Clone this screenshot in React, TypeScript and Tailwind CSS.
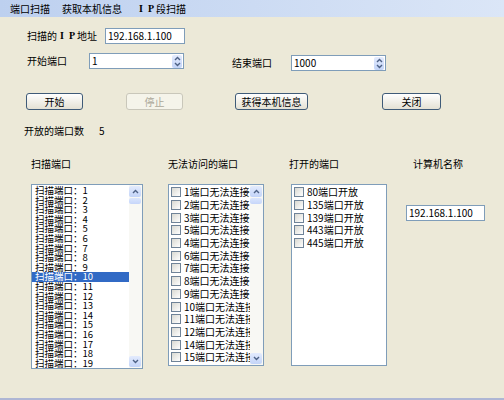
import React from "react";

const ports = Array.from({ length: 19 }, (_, i) => i + 1);
const blocked = [1, 2, 3, 5, 4, 6, 7, 8, 9, 10, 11, 12, 14, 15];
const opened = [80, 135, 139, 443, 445];

function Chevron({ up }: { up?: boolean }) {
  return (
    <svg width="7" height="5" viewBox="0 0 7 5" className="block">
      <path
        d={up ? "M1 4 L3.5 1.5 L6 4" : "M1 1 L3.5 3.5 L6 1"}
        fill="none"
        stroke="#4d6185"
        strokeWidth="1.4"
      />
    </svg>
  );
}

function IP() {
  // "I P" in the bold serif look of the original
  return (
    <>
      <span className="inline-block w-[10px] text-center font-['Liberation_Serif',serif] font-bold">I</span>
      <span className="inline-block w-[10px] text-center font-['Liberation_Serif',serif] font-bold">P</span>
    </>
  );
}

function TextBox({ value, className }: { value: string; className?: string }) {
  return (
    <div className={`h-[16px] border border-[#7f9db9] bg-white flex items-center pl-[2px] ${className ?? ""}`}>
      {value}
    </div>
  );
}

function SpinBox({ value }: { value: string }) {
  return (
    <div className="w-[95px] h-[16px] border border-[#7f9db9] bg-white flex items-center pl-[2px] pr-[1px]">
      <span className="flex-1">{value}</span>
      <div className="w-[10px] h-[13px] rounded-[2px] bg-gradient-to-b from-[#e3ebfd] to-[#c3d4f8] flex flex-col items-center justify-center gap-[1px]">
        <Chevron up />
        <Chevron />
      </div>
    </div>
  );
}

function Button({ label, w, disabled }: { label: string; w: string; disabled?: boolean }) {
  return (
    <div
      className={`${w} h-[17px] rounded-[3px] border flex items-center justify-center ${
        disabled
          ? "border-[#c9c7ba] bg-[#f5f4ea] text-[#aca899]"
          : "border-[#3f5b78] bg-gradient-to-b from-white to-[#e4e1d4] text-black"
      }`}
    >
      {label}
    </div>
  );
}

function ScrollBar() {
  return (
    <div className="w-[13px] flex flex-col py-[1px] pr-[1px] bg-[#f8f8f4]">
      <div className="h-[11px] rounded-[2px] bg-gradient-to-b from-[#e3ebfd] to-[#c3d4f8] flex items-center justify-center">
        <Chevron up />
      </div>
      <div className="h-[6px] mt-[1px] rounded-[2px] bg-gradient-to-b from-[#dbe6fd] to-[#c6d6fa]" />
      <div className="flex-1" />
      <div className="h-[11px] rounded-[2px] bg-gradient-to-b from-[#e3ebfd] to-[#c3d4f8] flex items-center justify-center">
        <Chevron />
      </div>
    </div>
  );
}

function CheckRow({ text }: { text: string }) {
  return (
    <div className="h-[12.7px] flex items-center whitespace-nowrap">
      <div className="ml-[2px] w-[10px] h-[10px] shrink-0 border border-[#6f8398] bg-gradient-to-br from-[#d9d9d2] to-white" />
      <span className="ml-[3px]">{text}</span>
    </div>
  );
}

export default function App() {
  return (
    <div className="w-[504px] h-[400px] bg-[#ece9d8] text-black text-[10px] leading-[12px] font-['Noto_Sans_CJK_SC',sans-serif] flex flex-col overflow-hidden">
      {/* menu */}
      <div className="h-[17px] flex items-center bg-gradient-to-r from-[#bdd0ef] to-[#dbe6f7]">
        <span className="ml-[10px]">端口扫描</span>
        <span className="ml-[12px]">获取本机信息</span>
        <span className="ml-[14px] flex items-center">
          <IP />
          段扫描
        </span>
      </div>

      {/* address */}
      <div className="mt-[11px] h-[16px] flex items-center pl-[27px]">
        <span className="w-[78px] flex items-center">
          扫描的
          <IP />
          地址
        </span>
        <TextBox value="192.168.1.100" className="w-[80px]" />
      </div>

      {/* port range */}
      <div className="mt-[9px] flex items-start pl-[27px]">
        <span className="w-[62px] h-[16px] flex items-center">开始端口</span>
        <SpinBox value="1" />
        <div className="ml-[48px] mt-[2px] flex items-center">
          <span className="w-[59px]">结束端口</span>
          <SpinBox value="1000" />
        </div>
      </div>

      {/* buttons */}
      <div className="mt-[22px] flex items-center pl-[26px]">
        <Button label="开始" w="w-[57px]" />
        <div className="ml-[43px]">
          <Button label="停止" w="w-[57px]" disabled />
        </div>
        <div className="ml-[52px]">
          <Button label="获得本机信息" w="w-[73px]" />
        </div>
        <div className="ml-[74px]">
          <Button label="关闭" w="w-[59px]" />
        </div>
      </div>

      <div className="mt-[15px] h-[12px] flex items-center pl-[24px]">
        <span className="w-[75px]">开放的端口数</span>
        <span>5</span>
      </div>

      {/* lists */}
      <div className="mt-[21px] flex items-start pl-[31px]">
        <div className="w-[137px] flex flex-col">
          <span className="h-[12px]">扫描端口</span>
          <div className="mt-[14px] w-[112px] h-[185px] border border-[#7f9db9] bg-white flex">
            <div className="flex-1 min-w-0 pt-[1px] overflow-hidden">
              {ports.map((p) => (
                <div
                  key={p}
                  className={`h-[9.6px] leading-[9.6px] text-[9.5px] pl-[3px] whitespace-nowrap ${
                    p === 10 ? "bg-[#316ac5] text-white" : ""
                  }`}
                >
                  扫描端口：{p}
                </div>
              ))}
            </div>
            <ScrollBar />
          </div>
        </div>

        <div className="w-[123px] flex flex-col">
          <span className="h-[12px]">无法访问的端口</span>
          <div className="mt-[14px] w-[96px] h-[182px] border border-[#7f9db9] bg-white flex">
            <div className="flex-1 min-w-0 pt-[1px] overflow-hidden">
              {blocked.map((p) => (
                <CheckRow key={p} text={`${p}端口无法连接`} />
              ))}
            </div>
            <ScrollBar />
          </div>
        </div>

        <div className="w-[115px] flex flex-col">
          <span className="h-[12px] -ml-[2px]">打开的端口</span>
          <div className="mt-[14px] w-[96px] h-[182px] border border-[#7f9db9] bg-white pt-[1px] overflow-hidden">
            {opened.map((p) => (
              <CheckRow key={p} text={`${p}端口开放`} />
            ))}
          </div>
        </div>

        <div className="flex flex-col">
          <span className="h-[12px] ml-[7px]">计算机名称</span>
          <TextBox value="192.168.1.100" className="mt-[35px] w-[79px]" />
        </div>
      </div>

      <div className="mt-auto h-[2px] bg-[#aeb6d4]" />
    </div>
  );
}
